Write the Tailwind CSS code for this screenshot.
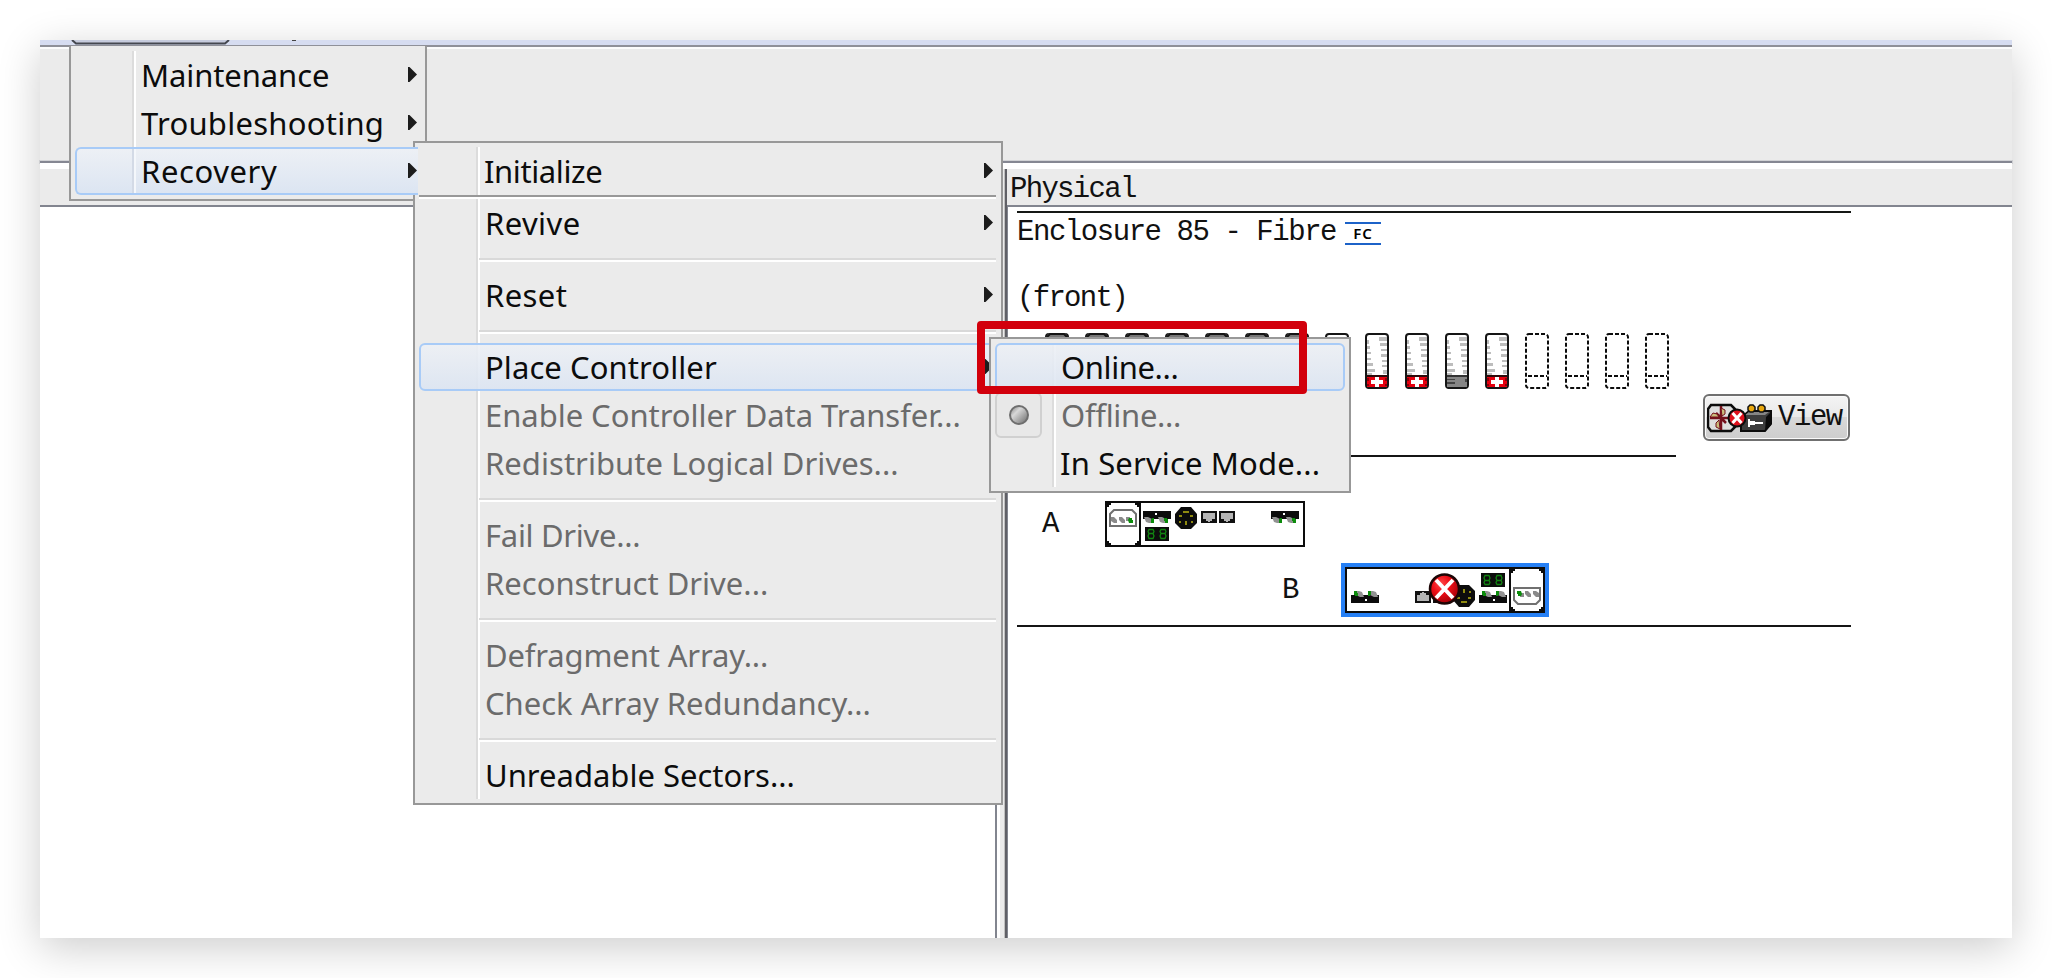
<!DOCTYPE html>
<html lang="en">
<head>
<meta charset="utf-8">
<title>Storage Manager</title>
<script src="https://cdn.jsdelivr.net/npm/@tailwindcss/browser@4"></script>
</head>
<body class="bg-white w-[2052px] h-[978px] overflow-hidden p-10 font-['Noto_Sans',sans-serif]">

<!-- Shared symbols -->
<svg class="absolute w-0 h-0">
  <defs>
    <linearGradient id="ball" x1="0" y1="0" x2="1" y2="1"><stop offset="0" stop-color="#777"/><stop offset=".35" stop-color="#d8d8d8"/><stop offset=".7" stop-color="#9a9a9a"/><stop offset="1" stop-color="#666"/></linearGradient>
    <radialGradient id="red" cx=".38" cy=".32" r=".7"><stop offset="0" stop-color="#ff4a4a"/><stop offset=".45" stop-color="#ee0d16"/><stop offset="1" stop-color="#a30008"/></radialGradient>
    <symbol id="arrow" viewBox="0 0 9 15"><path d="M0 0h1.500L9 7.500 1.500 15H0z" fill="#1c1c1c"/></symbol>
    <g id="shell">
      <rect x="1" y="1" width="22" height="54" rx="3" fill="#fff" stroke="#151515" stroke-width="2"/>
      <g fill="#bdbdbd">
        <path d="M2 7h2v4H2zM2 13h3v3H2zM2 19h4v2H2zM2 25h4v2H2zM2 30h6v3H2zM2 36h8v3H2zM2 40h5v2H2z"/>
        <path d="M14 4h8v4h-8zM15 10h7v3h-7zM16 16h6v2h-6zM16 21h6v3h-6zM17 27h5v2h-5zM17 32h5v2h-5zM18 37h4v4h-4z"/>
      </g>
    </g>
    <symbol id="drive-ok" viewBox="0 0 24 56"><use href="#shell"/><path d="M4 0h16l4 5H0z" fill="#777"/><path d="M1 5l4-4h14l4 4" fill="none" stroke="#151515" stroke-width="2"/></symbol>
    <symbol id="drive-open" viewBox="0 0 24 56"><use href="#shell"/></symbol>
    <symbol id="drive-spare" viewBox="0 0 24 56"><use href="#shell"/>
      <path d="M2 43h20v11H2z" fill="#e5000f"/><path d="M2 42h20v2H2z" fill="#2c0a0a"/>
      <path d="M2 45h2v3H2zM20 45h2v3h-2zM2 51h2v2H2zM20 51h2v2h-2z" fill="#8b0008"/>
      <path d="M10 44h4v3h4v4h-4v3h-4v-3H6v-4h4z" fill="#fff"/>
      <path d="M3 55h18" stroke="#151515" stroke-width="2"/></symbol>
    <symbol id="drive-gray" viewBox="0 0 24 56"><use href="#shell"/>
      <path d="M2 43h20v11H2z" fill="#868686"/><path d="M2 42h20v2H2z" fill="#333"/><path d="M2 46h8v1H2zM2 49h8v2H2zM20 46h2v3h-2z" fill="#444"/>
      <path d="M3 55h18" stroke="#151515" stroke-width="2"/></symbol>
    <symbol id="drive-empty" viewBox="0 0 24 56">
      <g fill="none" stroke="#0c0c0c" stroke-width="2"><rect x="1" y="1" width="22" height="54" rx="3" stroke-dasharray="4 2"/><path d="M3 43h19" stroke-dasharray="4 2"/></g></symbol>
    <g id="ports">
      <path d="M0 0h28v8H0z" fill="#0c0c0c"/><path d="M12 2h2v2h-2z" fill="#fff"/>
      <path d="M1 6h4l4 2v4H6l-3-1z M15 6h4l4 2v4h-3l-3-1z" fill="#929292"/>
      <path d="M8 8h3v4H8zM9 7h2v3H9zM22 8h3v4h-3zM21 7h3v3h-3z" fill="#0c8c0c"/>
    </g>
    <g id="rj"><path d="M0 0h16v12H0z" fill="#111"/><path d="M2 2h12v6h-3v2H9v1H7v-1H5V8H2z" fill="#b5b5b5"/></g>
    <g id="board">
      <rect x="1" y="1" width="198" height="44" fill="#fff" stroke="#0c0c0c" stroke-width="2"/>
      <path d="M35 1v44" stroke="#0c0c0c" stroke-width="2"/>
      <path d="M2 2h4v2H4v2H2zM30 2h4v4h-2V4h-2zM2 40h2v2h2v2H2zM32 40h2v4h-4v-2h2z" fill="#0c0c0c"/>
      <path d="M5 25V13l4-4h18l4 4v12z" fill="#fff" stroke="#707070" stroke-width="2"/>
      <g fill="#8a8a8a"><path d="M6 16h3l3 3v3H9l-3-2zM14 16h3l3 3v3h-3l-3-3zM21 16h4v4h-4z"/></g>
      <path d="M24 17h3v2h1v3h-4l-1-3z" fill="#0c8c0c"/>
      <use href="#ports" x="38" y="10"/>
      <path d="M40 26h24v14H40z" fill="#0c0c0c"/>
      <g fill="none" stroke="#118411" stroke-width="1.300"><path d="M44 28.500h4l1 2-1 2h-4l-1-2zM44 32.500h4l1 2.500-1 2.500h-4L43 35zM56 28.500h4l1 2-1 2h-4l-1-2zM56 32.500h4l1 2.500-1 2.500h-4l-1-2.500z"/></g>
      <path d="M76 6h10l6 7v9l-6 6H76l-6-6v-9z" fill="#0c0c0c"/>
      <path d="M78 10h6v2h-6zM74 14h3v2h-3zM85 14h3v2h-3zM74 20h2v2h-2zM86 20h2v2h-2zM80 20h2v4h-2z" fill="#8f8a10"/>
      <use href="#rj" x="96" y="10"/><use href="#rj" x="114" y="10"/>
      <use href="#ports" x="166" y="10"/>
    </g>
  </defs>
</svg>

<div class="relative flex flex-col w-[1972px] h-[898px] bg-white shadow-[0_10px_40px_rgba(0,0,0,0.2)]">
  <!-- Bottom edge of the menu bar -->
  <div class="h-[5px] shrink-0 bg-[#d6dcf0] flex items-start">
    <svg class="ml-[31px]" width="160" height="5" viewBox="0 0 160 5"><path d="M1 0l4 3.500h149L158 0z" fill="#c6cbdd"/><path d="M1 0l4 3.500h149L158 0" fill="none" stroke="#44474f" stroke-width="2"/></svg>
    <div class="ml-[61px] w-1 h-[1px] bg-[#444]"></div>
  </div>
  <div class="h-[2px] shrink-0 bg-[#8f9098]"></div>
  <div class="h-[2px] shrink-0 bg-[#fcfcfc]"></div>
  <div class="h-[112px] shrink-0 bg-[#ebebeb]"></div>
  <div class="h-[2px] shrink-0 bg-[#858792] outline outline-[#858792]/25"></div>
  <div class="h-[6px] shrink-0 bg-white"></div>

  <div class="flex grow min-h-0">
    <!-- Logical pane -->
    <div class="flex flex-col w-[957px]">
      <div class="h-[36px] bg-[#ebebeb]"></div>
      <div class="grow bg-white border-t-2 border-r-2 border-[#82858f]"></div>
    </div>
    <div class="w-[8px] bg-[#ebebeb] border-l-[3px] border-white border-r-1 border-r-[#c0c0c0]"></div>

    <!-- Physical pane -->
    <div class="flex flex-col grow border-l-2 border-[#606066] font-['Liberation_Mono',monospace] text-[29px] tracking-[-1.450px] text-[#111]">
      <div class="h-[36px] bg-[#ebebeb] pl-[3px] leading-[41px] tracking-[-1.700px] whitespace-pre">Physical</div>
      <div class="grow border-t-2 border-l-[1px] border-[#82858f] pl-[9px] pt-1">
        <div class="w-[834px] flex flex-col">
          <div class="h-[2px] bg-[#151815]"></div>
          <div class="flex items-center h-10 leading-[40px] whitespace-pre"><span class="w-[328px]">Enclosure 85 - Fibre</span><span class="w-9 h-[23px] border-y-2 border-[#1c62c8] flex items-center justify-center font-['Noto_Sans',sans-serif] font-semibold text-[15px] leading-none tracking-[1px] text-black">FC</span></div>
          <div class="mt-[26px] h-10 leading-[40px] tracking-[-1.700px] whitespace-pre">(front)</div>
          <div class="mt-[14px] ml-7 flex gap-4">
            <svg width="24" height="56"><use href="#drive-ok"/></svg>
            <svg width="24" height="56"><use href="#drive-ok"/></svg>
            <svg width="24" height="56"><use href="#drive-ok"/></svg>
            <svg width="24" height="56"><use href="#drive-ok"/></svg>
            <svg width="24" height="56"><use href="#drive-ok"/></svg>
            <svg width="24" height="56"><use href="#drive-ok"/></svg>
            <svg width="24" height="56"><use href="#drive-ok"/></svg>
            <svg width="24" height="56"><use href="#drive-open"/></svg>
            <svg width="24" height="56"><use href="#drive-spare"/></svg>
            <svg width="24" height="56"><use href="#drive-spare"/></svg>
            <svg width="24" height="56"><use href="#drive-gray"/></svg>
            <svg width="24" height="56"><use href="#drive-spare"/></svg>
            <svg width="24" height="56"><use href="#drive-empty"/></svg>
            <svg width="24" height="56"><use href="#drive-empty"/></svg>
            <svg width="24" height="56"><use href="#drive-empty"/></svg>
            <svg width="24" height="56"><use href="#drive-empty"/></svg>
          </div>
          <div class="mt-[5px] ml-auto mr-[1px] w-[147px] h-[47px] flex items-center pl-[2px] border-2 border-[#707070] rounded-[6px] bg-[linear-gradient(#f4f4f4,#e9e9e9_50%,#d9d9d9_50%,#cdcdcd)] shadow-[inset_0_0_0_1px_#fafafa]">
            <svg width="66" height="30" viewBox="0 0 66 30" class="shrink-0">
              <path d="M4 2h20l4 4v18l-4 4H4l-3-4V6z" fill="#dedede" stroke="#0c0c0c" stroke-width="2.500"/>
              <path d="M14 3v24M3 15h23M9 10l10 10" stroke="#74101c" stroke-width="2.500"/>
              <path d="M14 5l4 2v4l-3 2zM3 14l3-4 4 1 2 3zM13 26l-4-2v-4l3-3z" fill="#c9bd7c" stroke="#74101c"/>
              <path d="M36 13l6-5h22v13l-6 7H34v-9z" fill="#3d3d3d" stroke="#0c0c0c" stroke-width="2"/>
              <path d="M59 14l5-5v13l-6 6z" fill="#0c0c0c"/><path d="M38 12l4-3h20l-4 3z" fill="#858585"/>
              <path d="M42 16v3h5v2h-5v3M48 20h8" fill="none" stroke="#fff" stroke-width="2"/>
              <path d="M43 2h3l2 2v3l-2 2h-3l-2-2V4zM53 2h3l2 2v3l-2 2h-3l-2-2V4z" fill="#e9a80e" stroke="#111" stroke-width="1.500"/>
              <circle cx="30" cy="15" r="8.500" fill="#df101c" stroke="#0c0c0c" stroke-width="2"/>
              <path d="M25.500 10l9 10M34.500 10l-9 10" stroke="#fff" stroke-width="3"/>
            </svg>
            <span class="pl-[5px] leading-[43px]">View</span>
          </div>
          <div class="mt-[14px] w-[659px] h-[2px] bg-[#151515]"></div>
          <div class="mt-[44px] flex items-center h-[46px]">
            <span class="w-[88px] pl-[25px] leading-[46px] pt-[2px]">A</span>
            <svg width="200" height="46" viewBox="0 0 200 46"><use href="#board"/></svg>
          </div>
          <div class="mt-4 flex items-center h-[54px]">
            <span class="w-[324px] pl-[265px] leading-[50px] pt-[2px]">B</span>
            <svg width="208" height="54" viewBox="0 0 208 54">
              <path d="M0 0h208v54H0z" fill="#2680f5"/>
              <use href="#board" transform="translate(204 50) rotate(180)"/>
              <circle cx="103.500" cy="26" r="14.500" fill="url(#red)" stroke="#1b0505" stroke-width="2.500"/>
              <path d="M95 17l17 18M112 17l-17 18" stroke="#fff" stroke-width="4"/>
            </svg>
          </div>
          <div class="mt-2 h-[2px] bg-[#151515]"></div>
        </div>
      </div>
    </div>
  </div>

  <!-- Advanced menu -->
  <div class="absolute left-[29px] top-[6px] w-[358px] h-[155px] bg-[#ebebeb] border-2 border-t-0 border-[#989898] pt-[5px] pl-1 pr-[5px] text-[31px] leading-[48px] text-[#0c0c0c] whitespace-nowrap">
    <div class="absolute left-[61px] top-[5px] w-1 h-[144px] bg-[#dcdcdc] border-r-2 border-white"></div>
    <div class="relative flex items-center h-12 pl-[66px] tracking-[-0.100px]">Maintenance<svg class="ml-auto mr-[3px] mb-[2px]" width="9" height="15"><use href="#arrow"/></svg></div>
    <div class="relative flex items-center h-12 pl-[66px] tracking-[0.260px]">Troubleshooting<svg class="ml-auto mr-[3px] mb-[2px]" width="9" height="15"><use href="#arrow"/></svg></div>
    <div class="relative z-20 flex items-center w-[343px] h-12 pl-[64px] tracking-[0.600px] border-2 border-r-0 border-[#a8cbf7] rounded-l-[6px] bg-linear-to-b from-[#edf0f5] to-[#dce5f2]"><div class="absolute left-[55px] inset-y-0 w-1 bg-[#d3dae6] border-r-2 border-[#f4f7fb]"></div>Recovery<svg class="ml-auto mr-[1px] mb-[2px]" width="9" height="15"><use href="#arrow"/></svg></div>
  </div>

  <!-- Recovery submenu -->
  <div class="absolute z-10 left-[373px] top-[101px] w-[590px] h-[664px] bg-[#ebebeb] border-2 border-[#989898] pt-1 pl-1 pr-[5px] text-[31px] leading-[48px] text-[#0c0c0c] whitespace-nowrap">
    <div class="absolute left-[61px] top-1 w-1 h-[652px] bg-[#dcdcdc] border-r-2 border-white"></div>
    <div class="relative flex items-center h-12 pl-[65px] tracking-[-0.400px]">Initialize<svg class="ml-auto mr-[3px] mb-[2px]" width="9" height="15"><use href="#arrow"/></svg></div>
    <div class="relative h-1 bg-white border-t-2 border-[#989898]"></div>
    <div class="relative flex items-center h-12 pl-[66px] tracking-[0.400px]">Revive<svg class="ml-auto mr-[3px] mb-[2px]" width="9" height="15"><use href="#arrow"/></svg></div>
    <div class="relative ml-[60px] my-[10px] h-1 translate-y-[1px] bg-white border-t-2 border-[#d9d9d9]"></div>
    <div class="relative flex items-center h-12 pl-[66px] tracking-[0.400px]">Reset<svg class="ml-auto mr-[3px] mb-[2px]" width="9" height="15"><use href="#arrow"/></svg></div>
    <div class="relative ml-[60px] my-[10px] h-1 translate-y-[1px] bg-white border-t-2 border-[#d9d9d9]"></div>
    <div class="relative flex items-center h-12 pl-[64px] tracking-[0.080px] border-2 border-[#a8cbf7] rounded-[6px] bg-linear-to-b from-[#edf0f5]/90 to-[#dce5f2]/90">Place Controller<svg class="ml-auto mr-[1px] mb-[2px]" width="9" height="15"><use href="#arrow"/></svg></div>
    <div class="relative h-12 pl-[66px] tracking-[-0.040px] text-[#6b6b6b]">Enable Controller Data Transfer...</div>
    <div class="relative h-12 pl-[66px] tracking-[0.040px] text-[#6b6b6b]">Redistribute Logical Drives...</div>
    <div class="relative ml-[60px] my-[10px] h-1 translate-y-[1px] bg-white border-t-2 border-[#d9d9d9]"></div>
    <div class="relative h-12 pl-[66px] tracking-[-0.300px] text-[#6b6b6b]">Fail Drive...</div>
    <div class="relative h-12 pl-[66px] text-[#6b6b6b]">Reconstruct Drive...</div>
    <div class="relative ml-[60px] my-[10px] h-1 translate-y-[1px] bg-white border-t-2 border-[#d9d9d9]"></div>
    <div class="relative h-12 pl-[66px] tracking-[-0.150px] text-[#6b6b6b]">Defragment Array...</div>
    <div class="relative h-12 pl-[66px] text-[#6b6b6b]">Check Array Redundancy...</div>
    <div class="relative ml-[60px] my-[10px] h-1 translate-y-[1px] bg-white border-t-2 border-[#d9d9d9]"></div>
    <div class="relative h-12 pl-[66px]">Unreadable Sectors...</div>
  </div>

  <!-- Place Controller submenu -->
  <div class="absolute z-20 left-[949px] top-[297px] w-[362px] h-[156px] bg-[#ebebeb] border-2 border-[#989898] pt-1 pl-1 pr-1 text-[31px] leading-[48px] text-[#0c0c0c] whitespace-nowrap">
    <div class="absolute left-[61px] top-1 w-1 h-[144px] bg-[#dcdcdc] border-r-2 border-white"></div>
    <div class="relative flex items-center h-12 pl-[64px] tracking-[-0.400px] border-2 border-[#a8cbf7] rounded-[6px] bg-linear-to-b from-[#edf0f5]/90 to-[#dce5f2]/90">Online...</div>
    <div class="relative flex items-center h-12 tracking-[-0.300px] text-[#6b6b6b]">
      <div class="w-[47px] h-[46px] border-2 border-[#d0d0d0] rounded-[6px] bg-[#e8e8e8] flex items-center justify-center"><svg width="20" height="20"><circle cx="10" cy="10" r="9" fill="url(#ball)" stroke="#6e6e6e" stroke-width="2"/></svg></div>
      <span class="pl-[19px]">Offline...</span>
    </div>
    <div class="relative h-12 pl-[65px] tracking-[0.150px]">In Service Mode...</div>
  </div>

  <!-- Highlight frame -->
  <div class="absolute z-30 left-[937px] top-[281px] w-[330px] h-[73px] border-8 border-[#d2000c] rounded-[4px]"></div>
</div>
</body>
</html>
